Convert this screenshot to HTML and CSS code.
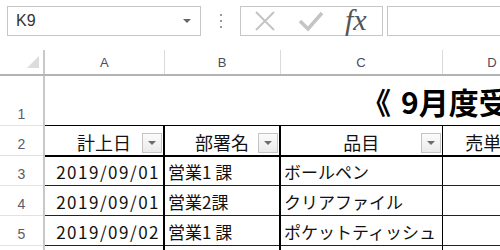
FILE: index.html
```html
<!DOCTYPE html>
<html lang="ja">
<head>
    <meta charset="UTF-8">
    <title>9月度受注一覧</title>
    <link rel="stylesheet" href="styles.css">
</head>
<body>
    <div class="toolbar">
        <div class="name-box">
            <span class="cell-ref">K9</span>
            <span class="drop"></span>
        </div>
        <div class="grip"><i></i><i></i><i></i></div>
        <div class="fx-buttons">
            <svg class="btn-cancel" width="22" height="20" viewBox="0 0 22 20">
                <path d="M2 1 L20 19 M20 1 L2 19" stroke="#c4c4c4" stroke-width="2" fill="none"/>
            </svg>
            <svg class="btn-enter" width="26" height="22" viewBox="0 0 26 22">
                <path d="M2 11 L10 19 L24 3" stroke="#c4c4c4" stroke-width="3.5" fill="none"/>
            </svg>
            <span class="fx">fx</span>
        </div>
        <div class="formula"></div>
    </div>

    <table class="sheet">
        <colgroup>
            <col class="col-rownum">
            <col class="col-a">
            <col class="col-b">
            <col class="col-c">
            <col class="col-d">
        </colgroup>
        <tr class="col-heads">
            <th class="corner"><span class="corner-mark"></span></th>
            <th>A</th>
            <th>B</th>
            <th>C</th>
            <th>D</th>
        </tr>
        <tr class="row-title">
            <th class="row-num">1</th>
            <td colspan="4" class="title"><span class="bracket">《</span>9月度受注一覧表 》</td>
        </tr>
        <tr class="row-head">
            <th class="row-num">2</th>
            <td class="hd hd-a"><div class="hd-inner">計上日<span class="filter"></span></div></td>
            <td class="hd hd-b"><div class="hd-inner">部署名<span class="filter"></span></div></td>
            <td class="hd hd-c"><div class="hd-inner">品目<span class="filter"></span></div></td>
            <td class="hd hd-d"><div class="hd-inner">売単価<span class="filter"></span></div></td>
        </tr>
        <tr class="row-data">
            <th class="row-num">3</th>
            <td class="date">2019/09/01</td>
            <td class="dept">営業1 課</td>
            <td class="item">ボールペン</td>
            <td class="price"></td>
        </tr>
        <tr class="row-data">
            <th class="row-num">4</th>
            <td class="date">2019/09/01</td>
            <td class="dept">営業2課</td>
            <td class="item">クリアファイル</td>
            <td class="price"></td>
        </tr>
        <tr class="row-data">
            <th class="row-num">5</th>
            <td class="date">2019/09/02</td>
            <td class="dept">営業1 課</td>
            <td class="item">ポケットティッシュ</td>
            <td class="price"></td>
        </tr>
        <tr class="row-data">
            <th class="row-num"></th>
            <td class="date"></td>
            <td class="dept"></td>
            <td class="item"></td>
            <td class="price"></td>
        </tr>
    </table>
</body>
</html>
```

FILE: styles.css
```css
html, body {
  margin: 0;
  overflow: hidden;
  background-color: #fff;
  font-family: "Noto Sans CJK JP", "DejaVu Sans", sans-serif;
}
.toolbar {
  display: flex;
  align-items: center;
  height: 50px;
  padding: 6px 0 14px 7px;
  box-sizing: border-box;
}
.name-box {
  width: 194px;
  height: 30px;
  border: 1px solid #c6c6c6;
  box-sizing: border-box;
  display: flex;
  align-items: center;
  justify-content: space-between;
  padding: 0 9px 0 8px;
}
.cell-ref {
  font-family: "Liberation Sans", Arial, sans-serif;
  font-size: 16px;
  color: #333;
}
.drop {
  width: 0;
  height: 0;
  border-left: 4px solid transparent;
  border-right: 4px solid transparent;
  border-top: 4px solid #666;
}
.grip {
  width: 39px;
  display: flex;
  flex-direction: column;
  align-items: center;
  gap: 4px;
}
.grip i {
  width: 2px;
  height: 2px;
  background-color: #9a9a9a;
}
.fx-buttons {
  width: 143px;
  height: 30px;
  border: 1px solid #c6c6c6;
  box-sizing: border-box;
  display: flex;
  align-items: center;
  padding-left: 13px;
}
.btn-cancel {
  margin-right: 22px;
}
.btn-enter {
  margin-right: 21px;
}
.fx {
  font-family: "Liberation Serif", "Times New Roman", serif;
  font-style: italic;
  font-size: 30px;
  color: #555;
  line-height: 1;
  margin-top: -2px;
}
.formula {
  flex: 1;
  height: 30px;
  margin-left: 4px;
  border: 1px solid #c6c6c6;
  border-right: none;
  box-sizing: border-box;
}

.sheet {
  border-collapse: collapse;
  table-layout: fixed;
  width: 542px;
}
.col-rownum { width: 44px; }
.col-a { width: 120px; }
.col-b { width: 116px; }
.col-c { width: 162px; }
.col-d { width: 100px; }

.col-heads th {
  height: 21px;
  padding: 0;
  font-family: "Liberation Sans", Arial, sans-serif;
  font-size: 13px;
  font-weight: normal;
  color: #4b4b5c;
  border-right: 1px solid #dadada;
  border-bottom: 2px solid #b4b4b4;
}
.col-heads th.corner {
  border-right: 2px solid #c8c8c8;
  text-align: right;
  vertical-align: bottom;
  padding: 0 4px 3px 0;
}
.corner-mark {
  display: inline-block;
  width: 0;
  height: 0;
  border-left: 12px solid transparent;
  border-bottom: 12px solid #dcdcdc;
}
.row-num {
  padding: 0 0 3px 0;
  vertical-align: bottom;
  font-family: "Liberation Sans", Arial, sans-serif;
  font-size: 14px;
  line-height: 16px;
  font-weight: normal;
  color: #5d5a66;
  border-right: 2px solid #c8c8c8;
  border-bottom: 1px solid #e2e2e2;
}
.row-title th {
  height: 46px;
}
.title {
  padding: 0 0 6px 316px;
  vertical-align: bottom;
  white-space: nowrap;
  overflow: hidden;
  font-size: 30px;
  font-weight: bold;
  color: #000;
  line-height: 36px;
}
.bracket {
  margin-right: 10px;
}
.row-head th {
  height: 26px;
}
.hd {
  padding: 0;
  font-size: 18px;
  color: #111;
  border-top: 1px solid #000;
  border-bottom: 2px solid #000;
  vertical-align: bottom;
}
.hd-inner {
  position: relative;
  text-align: center;
  line-height: 26px;
}
.filter {
  position: absolute;
  right: 1px;
  bottom: 2px;
  width: 20px;
  height: 20px;
  box-sizing: border-box;
  border: 1px solid #c4c4c4;
  background: linear-gradient(#fbfbfb, #ebebeb);
}
.filter::after {
  content: "";
  position: absolute;
  left: 5px;
  top: 7px;
  border-left: 4px solid transparent;
  border-right: 4px solid transparent;
  border-top: 4px solid #6d6d6d;
}
.row-data th {
  height: 26px;
}
.row-data td {
  padding: 0 3px 1px 3px;
  vertical-align: bottom;
  font-size: 17px;
  color: #111;
  white-space: nowrap;
  border-bottom: 1px solid #222;
  line-height: 24px;
}
.hd-a, .date {
  border-right: 2px solid #000;
}
.hd-b, .dept {
  border-right: 2px solid #000;
}
.hd-c, .item {
  border-right: 1px solid #000;
}
.date {
  text-align: right;
  letter-spacing: 1.5px;
}
```
